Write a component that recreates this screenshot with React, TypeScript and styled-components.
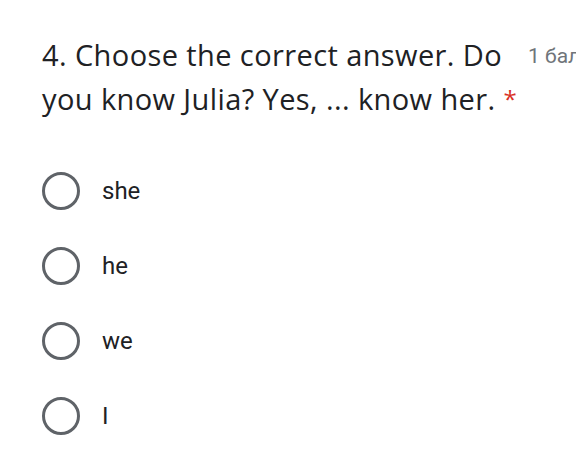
import React from 'react';
import styled, { createGlobalStyle } from 'styled-components';

const GlobalStyle = createGlobalStyle`
  html, body {
    margin: 0;
    padding: 0;
    background: #ffffff;
    overflow: hidden;
  }
`;

const Page = styled.div`
  width: 576px;
  height: 465px;
  overflow: hidden;
  box-sizing: border-box;
  padding: 33px 0 0 42px;
  background: #ffffff;
  font-family: Roboto, "Liberation Sans", sans-serif;
`;

const Header = styled.div`
  display: flex;
  align-items: flex-start;
  width: 600px;
`;

const Title = styled.div`
  width: 482px;
  flex-shrink: 0;
  font-family: "Open Sans", Roboto, sans-serif;
  font-size: 29px;
  line-height: 44px;
  color: #202124;
  letter-spacing: 0.4px;
`;

const NoWrap = styled.span`
  white-space: nowrap;
`;

const Required = styled.span`
  color: #d93025;
  margin-left: 8px;
  font-size: 24px;
  vertical-align: 2px;
`;

const Points = styled.div`
  margin-left: 4px;
  padding-top: 8px;
  font-size: 21px;
  line-height: 30px;
  color: #70757a;
  white-space: nowrap;
`;

const Options = styled.div`
  display: flex;
  flex-direction: column;
  margin-top: 32px;
`;

const Option = styled.label`
  display: flex;
  align-items: center;
  height: 75px;
`;

const Radio = styled.span`
  width: 38px;
  height: 38px;
  box-sizing: border-box;
  border: 3px solid #5f6368;
  border-radius: 50%;
  flex-shrink: 0;
`;

const OptionText = styled.span`
  margin-left: 22px;
  font-size: 24px;
  color: #202124;
`;

const answers = ['she', 'he', 'we', 'I'];

const App: React.FC = () => (
  <Page>
    <GlobalStyle />
    <Header>
      <Title>
        4. Choose the correct answer. Do you know Julia? Yes, ... know{' '}
        <NoWrap>
          her.<Required>*</Required>
        </NoWrap>
      </Title>
      <Points>1 балл</Points>
    </Header>
    <Options>
      {answers.map((a) => (
        <Option key={a}>
          <Radio />
          <OptionText>{a}</OptionText>
        </Option>
      ))}
    </Options>
  </Page>
);

export default App;
